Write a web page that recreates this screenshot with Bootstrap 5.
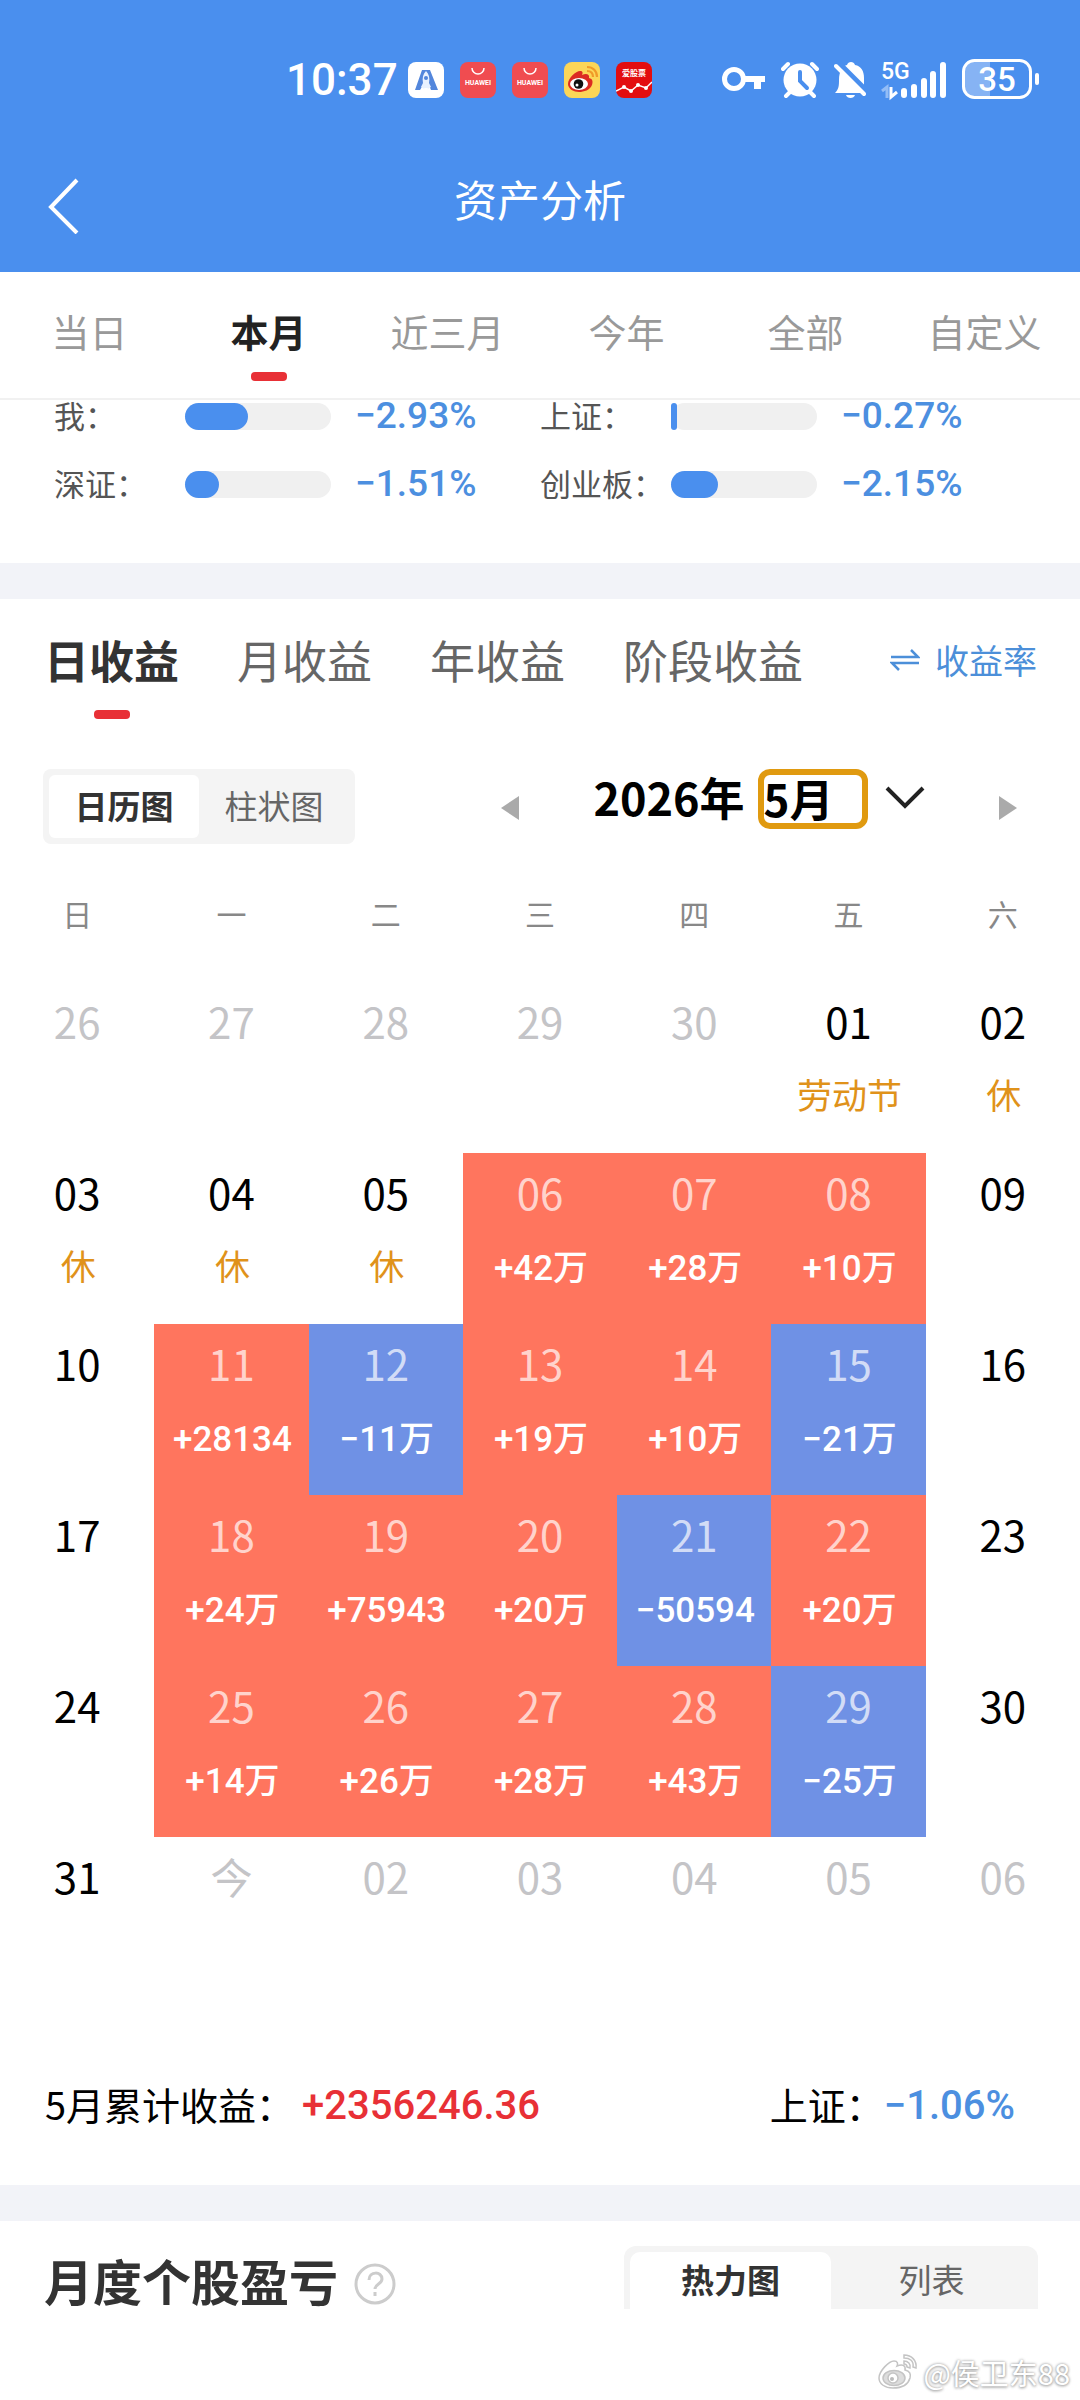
<!DOCTYPE html>
<html lang="zh-CN">
<head>
<meta charset="utf-8">
<meta name="viewport" content="width=device-width, initial-scale=1">
<title>资产分析</title>
<link href="https://cdn.jsdelivr.net/npm/bootstrap@5.3.0/dist/css/bootstrap.min.css" rel="stylesheet">
<style>
:root{--brand:#4a8fee;--figure:#4c8fe0;--accent:#e83036;--gain:#ff755e;--loss:#6f91e5;--holiday:#e0921a;--ink:#333;--dim:#666}
body{font-family:"Noto Sans CJK SC",sans-serif;color:#000;background:#fff;font-size:38px;line-height:60px}
button{font:inherit;color:inherit;background:none;border:0;padding:0}
svg{display:block;flex:none}
.num{font-family:Roboto,"Noto Sans CJK SC",sans-serif;font-weight:500}
.topbar{background:var(--brand);color:#fff}
.status-row{height:110px;padding:0 40px 0 286px}
.clock{font-family:Roboto,sans-serif;font-weight:500;font-size:44px;line-height:60px;width:122px}
.apps{gap:16px}
.sys{gap:15px}
.titlebar{height:162px;display:grid;grid-template-columns:1fr auto 1fr;align-items:center;padding:14px 48px 0}
.titlebar h1{font-size:43px;line-height:60px;font-weight:400;margin:0}
.range{padding:29px 6px 17px 0;border-bottom:2px solid #f1f1f1;color:#999}
.range button,.kinds .tabs button{display:flex;flex-direction:column;align-items:center}
.range button{flex:1 1 0}
.range button.active{font-weight:700;color:#222}
.mark-bar{width:36px;height:9px;border-radius:4px;margin-top:11px}
.active>.mark-bar{background:var(--accent)}
.compare{padding:0 54px 63px;display:grid;grid-template-columns:1fr 1fr;row-gap:36px}
.compare>div{height:32px;display:flex;align-items:center;line-height:32px}
.compare .lbl{font-size:31px;width:131px;color:#555;white-space:nowrap;padding-bottom:3px}
.compare .progress{width:146px;height:27px;border-radius:14px;background:#f0f0f0;flex:none;overflow:visible}
.compare .progress-bar{background:var(--brand);border-radius:14px}
.compare .num{font-size:37px;color:var(--figure);margin-left:24px}
.band{height:36px;background:#f2f3f8}
.kinds{padding:31px 43px 50px 44px;font-size:45px;color:var(--dim)}
.kinds .tabs{gap:58px}
.kinds .active{font-weight:700;color:var(--ink)}
.kinds .mark-bar{margin-top:20px}
.rate{font-size:34px;color:#4c8fd9;gap:15px}
.tools{padding:0 62px 0 43px}
.seg{background:#f4f4f4;border-radius:8px;padding:6px;font-size:33px;color:var(--dim);height:75px}
.seg button{height:63px;width:150px;border-radius:6px;padding-bottom:4px}
.seg .on{background:#fff;color:var(--ink);font-weight:700}
.picker{font-size:44px;font-weight:700;width:518px}
.picker .step{padding-top:18px}
.picker select{font:inherit;line-height:46px;width:110px;height:60px;border:6px solid #e09a10;border-radius:12px;background:#fff;appearance:none;padding:0 0 2px;color:#000;overflow:visible}
.ym{gap:13px;height:60px}
.ym label{line-height:46px;padding-bottom:4px;font-size:45px}
.cal{table-layout:fixed;width:100%;text-align:center;border-collapse:collapse}
.cal th{font-weight:400;font-size:30px;color:#888;height:138px;padding:0}
.cal td{height:171px;padding:9px 0 0;vertical-align:top}
.cal b,.cal i{display:block;font-style:normal}
.cal b{font-weight:400;font-size:42px;line-height:60px}
.cal i{font-family:Roboto,"Noto Sans CJK SC",sans-serif;font-weight:500;font-size:35px;line-height:60px;margin-top:17px;padding-left:2px;color:#fff;white-space:nowrap}
.cal .rest i{color:var(--holiday);font-weight:400}
.cal .out b{color:#c4c4c7}
.cal .up{background:var(--gain)}
.cal .down{background:var(--loss)}
.cal .up b,.cal .down b{color:rgba(255,255,255,.7)}
.total{padding:66px 65px 51px 45px}
.total .num{font-size:40px;padding-top:2px;height:60px}
.total .sum{color:var(--accent);margin-left:8px}
.total .idx{color:var(--figure)}
.stocks{padding:25px 42px 89px 44px}
.stocks h2{font-size:49px;font-weight:700;line-height:63px;color:var(--ink);margin:0;padding-top:2px}
.stocks .seg{height:63px;padding-bottom:0;border-radius:12px 12px 0 0}
.stocks .seg button{width:201px;height:57px;border-radius:10px 10px 0 0;padding:0 0 2px;line-height:55px}
.sign{position:absolute;right:10px;bottom:0;height:56px;gap:4px;font-size:29px;line-height:44px;color:#fff;text-shadow:0 0 3px #999,0 1px 3px #aaa}
</style>
<script src="https://cdn.jsdelivr.net/npm/bootstrap@5.3.0/dist/js/bootstrap.bundle.min.js"></script>
</head>
<body class="position-relative">
<header class="topbar">
  <div class="status-row d-flex align-items-end justify-content-between">
    <div class="d-flex align-items-center">
      <span class="clock">10:37</span>
      <div class="apps d-flex">
        <svg width="36" height="36" viewBox="0 0 36 36"><rect width="36" height="36" rx="8" fill="#fff"/><path d="M14 8h8l8 20h-7l-2-5h-6l-3 5H7z" fill="#5286dc"/><path d="M18 9c3 3 4 7 3 12l2 4-5 3-5-3 2-4c-1-5 0-9 3-12z" fill="#e8f1ff"/><circle cx="18" cy="16" r="2" fill="#5286dc"/><path d="M16 26h4l-2 4z" fill="#fff"/></svg>
        <svg width="36" height="36" viewBox="0 0 36 36"><rect width="36" height="36" rx="8" fill="#f04c50"/><path d="M12 6a6 6 0 0 0 12 0" fill="none" stroke="#fff" stroke-width="1.5"/><text x="18" y="23" fill="#fff" font-family="Roboto" font-weight="700" font-size="7" text-anchor="middle">HUAWEI</text></svg>
        <svg width="36" height="36" viewBox="0 0 36 36"><rect width="36" height="36" rx="8" fill="#f04c50"/><path d="M12 6a6 6 0 0 0 12 0" fill="none" stroke="#fff" stroke-width="1.5"/><text x="18" y="23" fill="#fff" font-family="Roboto" font-weight="700" font-size="7" text-anchor="middle">HUAWEI</text></svg>
        <svg width="36" height="36" viewBox="0 0 36 36"><rect width="36" height="36" rx="8" fill="#fcd658"/><path d="M4 22c0-6 8-13 12-13 3 0 3 2 2 4 4-2 8-1 7 3 4 1 4 4 3 7-2 5-8 7-13 7S4 27 4 22z" fill="#dc2a22"/><ellipse cx="15" cy="22" rx="9" ry="6" fill="#fff"/><circle cx="14.500" cy="22" r="4.800" fill="#111"/><circle cx="13" cy="23" r="1.500" fill="#fff"/><path d="M23 5c6 0 10 4 10 10M23 9c4 0 6 2 6 6" fill="none" stroke="#f09a28" stroke-width="2.200"/></svg>
        <svg width="36" height="36" viewBox="0 0 36 36"><rect width="36" height="36" rx="8" fill="#e30d10"/><text x="18" y="14" fill="#fff" font-family="Noto Sans CJK SC" font-weight="700" font-size="8" text-anchor="middle">爱股票</text><path d="M0 29l8-4 7 4 7-6 8 3 6-6" fill="none" stroke="#fff" stroke-width="1.500"/><g fill="#fff"><circle cx="8" cy="25" r="2"/><circle cx="15" cy="29" r="2"/><circle cx="22" cy="23" r="2"/><circle cx="30" cy="26" r="2"/></g></svg>
      </div>
    </div>
    <div class="sys d-flex align-items-center">
      <svg width="44" height="60" viewBox="0 0 44 60"><circle cx="12" cy="29" r="9.500" fill="none" stroke="#fff" stroke-width="5"/><path d="M21 26h22v6h-4v7h-7v-7H21z" fill="#fff"/></svg>
      <svg width="38" height="60" viewBox="0 0 38 60"><g stroke="#fff" stroke-width="4" stroke-linecap="round"><path d="M2 19l5-5M36 19l-5-5M9 42l-4 4M29 42l4 4"/></g><circle cx="19" cy="30" r="16.500" fill="#fff"/><path d="M19 22v9l7 7" fill="none" stroke="#4a8fee" stroke-width="4" stroke-linecap="round"/></svg>
      <svg width="32" height="60" viewBox="0 0 32 60"><path d="M1 43c4-4 4-8 4-13 0-9 4-14 8-15 1-4 7-4 8 0 6 1 9 6 9 13v9l2 6z" fill="#fff"/><path d="M12 45h9c-1 4-8 4-9 0z" fill="#fff"/><path d="M4 12l32 32" stroke="#4a8fee" stroke-width="5"/><path d="M2 16l28 28" stroke="#fff" stroke-width="4" stroke-linecap="round"/></svg>
      <svg width="66" height="60" viewBox="0 0 66 60"><text x="0" y="29" fill="#fff" font-family="Roboto" font-weight="500" font-size="23">5G</text><g stroke="#fff" stroke-width="6" stroke-linecap="round"><path d="M23 41v4M33 37v8M43 31v14M52 24v21M62 15v30"/></g><path d="M1 41l5-4v11" fill="none" stroke="#93bdf6" stroke-width="3"/><path d="M10 37v10l6-5" fill="none" stroke="#fff" stroke-width="3"/></svg>
      <svg width="78" height="60" viewBox="0 0 78 60"><path d="M14 10h14v38H14c-7 0-12-4-12-11V21c0-7 5-11 12-11z" fill="#86b3f4"/><rect x="1.500" y="10.500" width="67" height="37" rx="11" fill="none" stroke="#fff" stroke-width="3"/><rect x="73" y="23" width="4" height="12" rx="2" fill="#fff"/><text x="35" y="41" fill="#fff" font-family="Roboto" font-weight="500" font-size="33" text-anchor="middle">35</text></svg>
    </div>
  </div>
  <div class="titlebar">
    <button type="button" class="me-auto" aria-label="返回"><svg width="32" height="72" viewBox="0 0 32 72"><path d="M29 18L3 45l26 26" fill="none" stroke="#fff" stroke-width="4"/></svg></button>
    <h1>资产分析</h1>
  </div>
</header>

<nav class="range d-flex" aria-label="时间范围">
  <button type="button">当日<span class="mark-bar"></span></button>
  <button type="button" class="active">本月<span class="mark-bar"></span></button>
  <button type="button">近三月<span class="mark-bar"></span></button>
  <button type="button">今年<span class="mark-bar"></span></button>
  <button type="button">全部<span class="mark-bar"></span></button>
  <button type="button">自定义<span class="mark-bar"></span></button>
</nav>

<section class="compare">
  <div><span class="lbl">我：</span><div class="progress"><div class="progress-bar" style="width:43%"></div></div><span class="num">−2.93%</span></div>
  <div><span class="lbl">上证：</span><div class="progress"><div class="progress-bar" style="width:4%"></div></div><span class="num">−0.27%</span></div>
  <div><span class="lbl">深证：</span><div class="progress"><div class="progress-bar" style="width:23%"></div></div><span class="num">−1.51%</span></div>
  <div><span class="lbl">创业板：</span><div class="progress"><div class="progress-bar" style="width:32%"></div></div><span class="num">−2.15%</span></div>
</section>
<div class="band"></div>

<section>
  <div class="kinds d-flex justify-content-between align-items-start">
    <div class="tabs d-flex">
      <button type="button" class="active">日收益<span class="mark-bar"></span></button>
      <button type="button">月收益<span class="mark-bar"></span></button>
      <button type="button">年收益<span class="mark-bar"></span></button>
      <button type="button">阶段收益<span class="mark-bar"></span></button>
    </div>
    <button type="button" class="rate d-flex align-items-center"><svg width="30" height="24" viewBox="0 0 30 24"><path d="M1 9h27L21 2M29 15H2l7 7" fill="none" stroke="currentColor" stroke-width="2.500"/></svg>收益率</button>
  </div>
  <div class="tools d-flex justify-content-between align-items-start">
    <div class="seg d-flex"><button type="button" class="on">日历图</button><button type="button">柱状图</button></div>
    <div class="picker d-flex justify-content-between">
      <button type="button" aria-label="上个月" class="step"><svg width="20" height="26" viewBox="0 0 20 26"><path d="M19 1v24L1 13z" fill="#aaa"/></svg></button>
      <div class="ym d-flex align-items-center">
        <label for="month">2026年</label>
        <select id="month"><option>5月</option></select>
        <svg class="ms-1" width="40" height="30" viewBox="0 0 40 30"><path d="M2 4l18 18L38 4" fill="none" stroke="#222" stroke-width="4"/></svg>
      </div>
      <button type="button" aria-label="下个月" class="step"><svg width="20" height="26" viewBox="0 0 20 26"><path d="M1 1v24l18-12z" fill="#aaa"/></svg></button>
    </div>
  </div>
  <table class="cal">
    <thead><tr><th>日</th><th>一</th><th>二</th><th>三</th><th>四</th><th>五</th><th>六</th></tr></thead>
    <tbody>
      <tr><td class="out"><b>26</b></td><td class="out"><b>27</b></td><td class="out"><b>28</b></td><td class="out"><b>29</b></td><td class="out"><b>30</b></td><td class="rest"><b>01</b><i>劳动节</i></td><td class="rest"><b>02</b><i>休</i></td></tr>
      <tr><td class="rest"><b>03</b><i>休</i></td><td class="rest"><b>04</b><i>休</i></td><td class="rest"><b>05</b><i>休</i></td><td class="up"><b>06</b><i>+42万</i></td><td class="up"><b>07</b><i>+28万</i></td><td class="up"><b>08</b><i>+10万</i></td><td><b>09</b></td></tr>
      <tr><td><b>10</b></td><td class="up"><b>11</b><i>+28134</i></td><td class="down"><b>12</b><i>−11万</i></td><td class="up"><b>13</b><i>+19万</i></td><td class="up"><b>14</b><i>+10万</i></td><td class="down"><b>15</b><i>−21万</i></td><td><b>16</b></td></tr>
      <tr><td><b>17</b></td><td class="up"><b>18</b><i>+24万</i></td><td class="up"><b>19</b><i>+75943</i></td><td class="up"><b>20</b><i>+20万</i></td><td class="down"><b>21</b><i>−50594</i></td><td class="up"><b>22</b><i>+20万</i></td><td><b>23</b></td></tr>
      <tr><td><b>24</b></td><td class="up"><b>25</b><i>+14万</i></td><td class="up"><b>26</b><i>+26万</i></td><td class="up"><b>27</b><i>+28万</i></td><td class="up"><b>28</b><i>+43万</i></td><td class="down"><b>29</b><i>−25万</i></td><td><b>30</b></td></tr>
      <tr><td><b>31</b></td><td class="out"><b>今</b></td><td class="out"><b>02</b></td><td class="out"><b>03</b></td><td class="out"><b>04</b></td><td class="out"><b>05</b></td><td class="out"><b>06</b></td></tr>
    </tbody>
  </table>
  <div class="total d-flex justify-content-between">
    <div class="d-flex"><span>5月累计收益：</span><span class="num sum">+2356246.36</span></div>
    <div class="d-flex"><span>上证：</span><span class="num idx">−1.06%</span></div>
  </div>
</section>
<div class="band"></div>

<section class="stocks d-flex justify-content-between">
  <div class="d-flex align-items-start"><h2>月度个股盈亏</h2><button type="button" aria-label="说明" class="ms-3"><svg width="42" height="62" viewBox="0 0 42 62"><circle cx="21" cy="38" r="19" fill="none" stroke="#ccc" stroke-width="3"/><path d="M15 34c0-9 13-9 13-1 0 5-7 5-7 10M21 46v4" fill="none" stroke="#ccc" stroke-width="3"/></svg></button></div>
  <div class="seg d-flex"><button type="button" class="on">热力图</button><button type="button">列表</button></div>
</section>
<div class="sign d-flex align-items-center"><svg width="42" height="40" viewBox="0 0 42 40"><g fill="#fff" stroke="#c4c4c4" stroke-width="1.500"><path d="M2 26c0-7 10-17 15-17 4 0 4 3 3 5 5-2 9-1 8 4 5 1 6 4 5 8-2 7-9 10-17 10S2 32 2 26z"/><ellipse cx="17" cy="26" rx="11" ry="7.500" fill="#ddd"/><circle cx="16" cy="26" r="5"/><path d="M27 3c8 0 13 6 12 13l-3-1c1-6-3-9-9-9zM27 9c4 0 7 3 6 7l-3-1c0-2-1-3-3-3z"/></g><circle cx="15" cy="27" r="2" fill="#bbb"/></svg><span>@侯卫东88</span></div>
</body>
</html>
